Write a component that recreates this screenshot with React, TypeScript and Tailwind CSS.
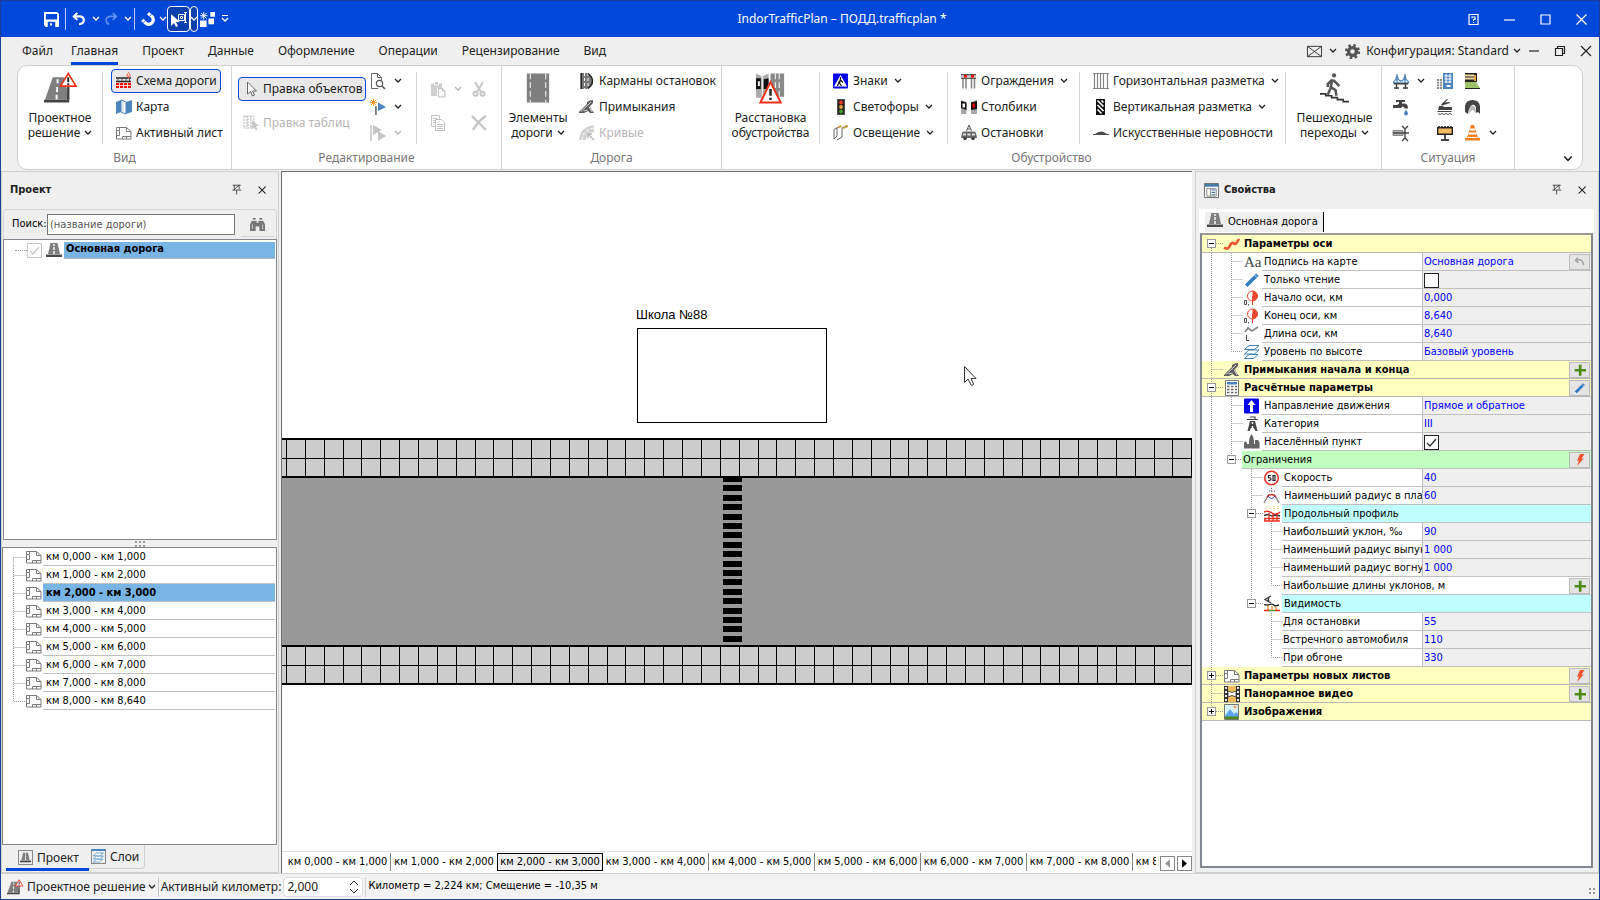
import { useState, type ReactNode } from 'react';
import clsx from 'clsx';

const UI = "font-['Noto_Sans','Open_Sans',sans-serif]";
const TREE = "font-['DejaVu_Sans_Condensed','DejaVu_Sans',sans-serif]";

/* ---------- icons ---------- */

const road = (
  <>
    <path d="M4.5 1h7l2.5 11H2z" fill="#7f7f7f" />
    <path d="M8 2v2M8 5v3M8 9v3" stroke="#fff" strokeWidth="1.4" />
    <path d="M0 12.5h16V15H0z" fill="#4a4a4a" />
  </>
);

const sheet = (
  <>
    <path d="M.5 2.500h10l4.500 4v7.500H.5z" fill="#fff" stroke="#7a7a7a" />
    <path d="M3.500 2.500v3H.5M3.500 6v4.500H.5M10.500 2.500v4h4.500M6.500 14v-2.500h8.500M10.500 11.500V14" fill="none" stroke="#7a7a7a" />
  </>
);

const junction = (
  <>
    <path d="M0 13L8 5V3l3-1.500L14 1v3l-3 3 1 3 3 4h-4l-2-2-4 2H0z" fill="#5a5a5a" />
    <path d="M2 12.500L12 3M10 7.500l3 5.500M4.500 12l4-1" stroke="#ddd" strokeWidth="1" />
  </>
);

const layers = (
  <g fill="#fff" stroke="#3b83b8" strokeWidth="1">
    <path d="M.5 14.500L5 10.500h9l-4.500 4z" />
    <path d="M.5 10L5 6h10l-4.500 4z" />
    <path d="M.5 5.500L5 1.500h10l-4.500 4z" />
  </g>
);

const marker = (
  <>
    <circle cx="8.500" cy="6" r="5" fill="#fff" stroke="#e8472e" />
    <path d="M8.500 1a5 5 0 0 1 0 10z" fill="#e8472e" />
    <path d="M8.500 6v9" stroke="#e8472e" />
    <path d="M.5 10.500h2v4h-2zM4.500 14v1.500" fill="none" stroke="#555" />
  </>
);

const ICONS: Record<string, ReactNode> = {
  road,
  sheet,
  junction,
  layers,
  marker,
  lighting: (
    <>
      <path d="M1 4.500V14l3-3V2.500M1 4.500l6-3M4 15l5-3V3l5-2.500" fill="none" stroke="#666" />
      <path d="M5 2.500L8.500 1M10 3l5-2" stroke="#c9a24a" strokeWidth="2" />
    </>
  ),
  save: (
    <path fillRule="evenodd" d="M0 0h14l2 2v14H2l-2-2zM2 2v6h12V2zM4 10.500V16h8v-5.500zM6.500 12h2v2.500h-2z" fill="#fff" />
  ),
  undo: <path d="M6 1L2 5l4 4M2.500 5H9q4.500.5 4.500 4.500T8 14" fill="none" stroke="#fff" strokeWidth="2.400" />,
  redo: <path d="M10 1l4 4-4 4M13.500 5H7Q2.500 5.500 2.500 9.500T6 14" fill="none" stroke="#5f92f0" strokeWidth="1.800" />,
  magnet: (
    <>
      <path d="M1.500 9l3.500 3.500a5.200 5.200 0 0 0 7.500-7.500L8 1.500" fill="none" stroke="#fff" strokeWidth="3.800" />
      <path d="M2.500 12.800l2.300-3M10 5L12 2" stroke="#0048d9" strokeWidth=".8" />
    </>
  ),
  pick: (
    <>
      <path d="M0 3v12l3-3 2 4 2-1-2-4h4z" fill="#fff" />
      <path d="M7.500 3.500h6v6h-6zM9.500 5.500h2v2h-2zM13 1.500h3M13 11.500h3M14.500 1.500v10" fill="none" stroke="#fff" />
    </>
  ),
  windows: (
    <>
      <path d="M0 9h7v7H0zM9 7h6v6H9zM11 0h5v5h-5z" fill="#fff" />
      <path d="M4 0v8M0 4h8M1 1l6 6M7 1L1 7" stroke="#fff" />
    </>
  ),
  scheme: (
    <>
      <path d="M0 5h15M0 8.500h15" stroke="#222" strokeWidth="1.600" />
      <path d="M2 5v3M6 5v3M10 5v3M13.500 5v3" stroke="#555" />
      <path d="M0 10h15v5H0z" fill="#f00" />
      <path d="M0 12.500h15M3.500 10v5M7.500 10v5M11.500 10v5" stroke="#fff" strokeWidth=".8" />
      <path d="M12.500-.5l2 3.500h-4zM12.500 3v3" stroke="#e5603a" fill="#fff" strokeWidth=".9" />
    </>
  ),
  map: (
    <>
      <path d="M0 3l5-2v12l-5 2zM10 3l6-2v12l-6 2z" fill="#4a86bd" />
      <path d="M5 1l5 2v12l-5-2z" fill="#fff" stroke="#4a86bd" />
      <path d="M7 2v11" stroke="#bcd3e6" />
    </>
  ),
  cursor: <path d="M4.500 1v12l3-2.500 2 4.500 2-1-2-4h4z" fill="#fff" stroke="#666" />,
  tableCursor: (
    <>
      <path d="M1 1h10v12H1zM4 4h4M4 7h4M4 10h4M4 1v12M8 1v12" fill="none" stroke="#b9b9b9" strokeDasharray="2 1" />
      <path d="M9 5v9l2-2 2 3.500 1.500-1L13 11h3z" fill="#c8c8c8" />
    </>
  ),
  findDoc: (
    <>
      <path d="M8 15.500H1.500V.5h6l4 4V7M7.500.5v4h4" fill="none" stroke="#666" />
      <circle cx="9.500" cy="10.500" r="3.200" fill="#fff" stroke="#555" strokeWidth="1.200" />
      <path d="M12 13l3 3" stroke="#555" strokeWidth="1.600" />
    </>
  ),
  newFlag: (
    <>
      <path d="M3.500 0v7M0 3.500h7M1 1l5 5M6 1L1 6" stroke="#f09a2a" />
      <path d="M5 7h1.800v9H5z" fill="#777" />
      <path d="M8 3.500l8 4.500-8 4z" fill="#4a86bd" />
    </>
  ),
  playFlag: (
    <>
      <path d="M0 0h2v16H0z" fill="#d0d0d0" />
      <path d="M3 0l9 5-9 5zM8 6l8 5-8 5z" fill="#c4c4c4" />
    </>
  ),
  paste: (
    <>
      <path d="M1 2.500h11V7H7v8H1z" fill="#cfcfcf" />
      <path d="M4.500.8h4v3h-4z" fill="#c2c2c2" stroke="#fff" />
      <path d="M8.500 7.500h4l2.500 2.500v6H8.500zM12.500 7.500V10H15" fill="#fff" stroke="#bdbdbd" />
    </>
  ),
  copy: (
    <>
      <path d="M1.500.5h8v11h-8zM3 3.500h4M3 5.500h4M3 7.500h4" fill="#fff" stroke="#c4c4c4" />
      <path d="M5.500 4.500h6l3 3v8h-9zM7 9.500h6M7 11.500h6M7 13.500h6" fill="#fff" stroke="#c4c4c4" />
    </>
  ),
  cut: (
    <g fill="none" stroke="#c6c6c6" strokeWidth="2">
      <path d="M4 1l6 10M12 1L6 11" />
      <circle cx="4.500" cy="12.800" r="2" />
      <circle cx="11.500" cy="12.800" r="2" />
    </g>
  ),
  remove: <path d="M1 1l14 14M15 1Q7 6 2 15" fill="none" stroke="#c4c4c4" strokeWidth="2.400" />,
  pocket: (
    <>
      <path d="M1 0h8l3 3q2 2 2 5t-2 5l-3 3H1z" fill="#777" />
      <path d="M2.500 0v16" stroke="#222" />
      <path d="M5.500 0v16M9 0v16" stroke="#fff" strokeDasharray="3 2" />
      <path d="M9 .5l3 3q1.500 2 1.500 4.500T12 12.500L9 15.500" fill="none" stroke="#222" strokeWidth="1.400" />
    </>
  ),
  curves: (
    <>
      <path d="M0 15Q1 2 15 0v7Q8 7 7 15z" fill="#d2d2d2" />
      <path d="M3 15Q4 5 15 3" fill="none" stroke="#fff" strokeDasharray="3 2" />
      <path d="M9 9l6 6M9 9h4M9 9v4" stroke="#b5b5b5" strokeWidth="1.300" />
    </>
  ),
  sign: (
    <>
      <rect width="15" height="15" y=".5" rx="1" fill="#0404e8" />
      <path d="M7.500 2l6.500 11.500h-13z" fill="#fff" />
      <path d="M7.500 4v2M7.500 6l-1 4 2 3M6.500 8l-2 5M7.500 7l2.500 2.500" stroke="#111" strokeWidth="1.200" fill="none" />
    </>
  ),
  lights: (
    <>
      <rect x="4.500" y=".5" width="7" height="15" fill="#222" stroke="#555" />
      <circle cx="8" cy="3.500" r="1.900" fill="#ef3b25" />
      <circle cx="8" cy="8" r="1.900" fill="#e5a53a" />
      <circle cx="8" cy="12.500" r="1.900" fill="#4aa02c" />
    </>
  ),
  fence: (
    <>
      <path d="M0 2h15v3H0z" fill="#b9b9b9" />
      <path d="M3 2h3v2.500H3zM10 2h3v2.500h-3z" fill="#f00" />
      <path d="M0 1.500h15M0 5.500h15" stroke="#555" />
      <path d="M2 6v9.500M5 6v9.500M10.500 6v9.500M13.500 6v9.500" stroke="#8a8a8a" strokeWidth="1.600" />
    </>
  ),
  posts: (
    <>
      <path d="M0 1l5.500 2v12H0zM10 3l6-2v14h-6z" fill="#a8a8a8" />
      <path d="M0 2l5.500 1.500V11L0 9zM10 3.500L16 2v8l-6 1z" fill="#111" />
      <path d="M1.500 4.500H4v4H1.500z" fill="#fff" />
      <path d="M11.500 4.500H14v4h-2.500z" fill="#f00" />
    </>
  ),
  stops: (
    <>
      <path d="M5.500 6L8 0l2.500 6M6.500 4h3" fill="none" stroke="#555" />
      <path d="M1 8q0-1.500 2-1.500h10q2 0 2 1.500l1 5H0z" fill="#666" />
      <path d="M2 8.500h3v2H2zM6.500 8.500h3v2h-3zM11 8.500h3v2h-3z" fill="#ddd" />
      <circle cx="4" cy="13.500" r="1.800" fill="#444" />
      <circle cx="12" cy="13.500" r="1.800" fill="#444" />
    </>
  ),
  hMark: <path d="M0 .5h16M0 15.500h16M1.500 0v16M4.500 0v16M7.500 0v16M10.500 0v16M14.500 0v16" stroke="#858585" strokeWidth="1.200" />,
  vMark: (
    <>
      <path d="M3 0h9v16H3z" fill="#111" />
      <path d="M4.500 1.500l6 6M4.500 6l6 6M4.500 10.500l4 4M8.500 1.500l2 2" stroke="#fff" strokeWidth="1.700" />
    </>
  ),
  bump: <path d="M0 9h2q6-5 12 0h2v1H0z" fill="#4a4a4a" />,
  bridge: (
    <>
      <path d="M0 10h16M4 1v9M12 1v9M0 9q3-1 4-7 1 6 4 6 3 0 4-6 1 6 4 7" fill="none" stroke="#4a86bd" strokeWidth="1.300" />
      <path d="M1 10.800h14M3.500 11v5M12.500 11v5M1 15h5M10 15h5" stroke="#444" strokeWidth="1.500" />
    </>
  ),
  buildings: (
    <>
      <path d="M6 0h10v16H6z" fill="#4a86bd" />
      <path d="M7.500 3h7M7.500 6h7M7.500 9h7M9 1v9M13 1v9" stroke="#fff" />
      <path d="M9.500 12h4v2h-4z" fill="#fff" />
      <path d="M0 6h5v10H0z" fill="#8a8a8a" />
      <path d="M0 8.500h5M0 11h5M0 13.500h5M2.500 6v10" stroke="#fff" strokeWidth=".8" />
    </>
  ),
  embank: (
    <>
      <path d="M0 0h12v9H0z" fill="#222" />
      <path d="M0 2.500h9M0 5.500h9" stroke="#f4d9a8" strokeWidth="1.800" />
      <path d="M9 2h2v6H9z" fill="#e5a53a" />
      <path d="M0 9h11l4 6H0z" fill="#9cc36a" />
      <path d="M0 15.500h15" stroke="#222" />
    </>
  ),
  tap: (
    <>
      <path d="M0 6h4l2-1.500V3H3V1h9v2H9v1.500h2q4 0 4 5h-3.500q0-2-2-2L8 9H6L4.500 9H0z" fill="#444" />
      <path d="M13 10.500q2 3 2 4a2 2 0 0 1-4 0q0-1 2-4z" fill="#4a86bd" />
    </>
  ),
  water: (
    <>
      <path d="M10 0L4 5.500l1 1L13 4V3L8 3.500l3-3zM2 7h4l1 1h8v3H1z" fill="#444" />
      <path d="M0 13l1-1h14l-1 1z" fill="#444" />
      <path d="M1 14.500l2 1 2-1 2 1 2-1 2 1 2-1 2 1" fill="none" stroke="#555" />
    </>
  ),
  tunnel: (
    <>
      <path d="M0 13V7q1-6 7.500-6Q14 1 15 7v8l-2-2-2 1V9q-1-4-4-3-3 2-4 9z" fill="#444" />
      <path d="M4 15Q4 7 7.500 6.500 11 7 11 14q-2-3-3.500-3T4 15z" fill="#b5b5b5" />
    </>
  ),
  pipe: (
    <>
      <path d="M0 5.500h10v5H0z" fill="#b5b5b5" stroke="#888" />
      <path d="M0 8h16M9 1l3 3v9l-3 3M15 1l-3 3v9l3 3" fill="none" stroke="#444" strokeWidth="1.400" />
    </>
  ),
  billboard: (
    <>
      <path d="M.7 2.700h14.600v6.600H.7z" fill="#f4bd63" stroke="#222" strokeWidth="1.400" />
      <path d="M2 1v2M5 1v2M8 1v2M11 1v2M14 1v2M8 9v6" stroke="#222" strokeWidth="1.600" />
      <path d="M4 14h8v2H4z" fill="#444" />
    </>
  ),
  cone: (
    <>
      <path d="M6 0h3l4 13h2v2.500H0V13h2z" fill="#f58220" />
      <path d="M5 4.500h5M3.500 8.500h8" stroke="#fff" strokeWidth="1.800" />
      <path d="M3 12.500h9" stroke="#fff" />
    </>
  ),
  axis: <path d="M0 11.500c3 2 5 1 6-2s3-3 4-2 2 1 5-4.500" fill="none" stroke="#f0522e" strokeWidth="2.600" />,
  pencil: (
    <>
      <path d="M0 16l1.500-4L12 1.500 14.500 4 4 14.500z" fill="#2f78c4" />
      <path d="M0 16l1-3 2 2zM10.500 3L13 5.500" fill="#fff" stroke="#fff" strokeWidth=".8" />
    </>
  ),
  length: (
    <>
      <path d="M1 6l3-4 4 3 6-4" fill="none" stroke="#8a8a8a" strokeWidth="1.800" />
      <path d="M2.500 9v5.500H5" fill="none" stroke="#444" />
    </>
  ),
  calc: (
    <>
      <path d="M1.500.5h13v15h-13z" fill="#fff" stroke="#777" />
      <path d="M3 2h10v2.500H3z" fill="#4a86bd" />
      <path d="M3 6.500h2.500M7 6.500h2.500M11 6.500h2M3 9.500h2.500M7 9.500h2.500M11 9.500h2M3 12.500h2.500M7 12.500h2.500M11 12.500h2" stroke="#666" strokeWidth="1.600" />
    </>
  ),
  direction: (
    <>
      <rect width="15" height="15" y=".5" rx="1" fill="#0404e8" />
      <path d="M7.500 2l4 5H9v7H6V7H3.500z" fill="#fff" />
    </>
  ),
  category: (
    <>
      <path d="M3 3.500h11M6 1h5v2" stroke="#444" strokeWidth="1.200" fill="none" />
      <path d="M6 5h5l2.500 10h-2L10 12H7l-1.500 3h-2z" fill="#444" />
      <path d="M8.500 6v2M8.500 10v4" stroke="#fff" strokeWidth="1.400" />
    </>
  ),
  city: <path d="M0 14.500V9l1.500-2L3 9v1h2V7q0-4 2.500-7Q10 3 10 7v3h1V6h3l1.500 2v6.500z" fill="#666" />,
  speed: (
    <>
      <circle cx="7.500" cy="8" r="6.800" fill="#fff" stroke="#e8301e" strokeWidth="1.500" />
      <path d="M7 5.500H4.500v2.200q2.500-.2 2.500 1.300T4.300 10.500M9 5.500h2v5H9z" fill="none" stroke="#222" strokeWidth="1.200" />
    </>
  ),
  radius: (
    <>
      <path d="M0 15l5-9M15 15l-5-9" stroke="#888" strokeWidth="1.500" />
      <path d="M7.500 0v5M5 3h6" stroke="#555" strokeDasharray="1 1.500" />
      <path d="M3 9q4.500-5 9 0" fill="none" stroke="#e8301e" strokeWidth="1.400" />
      <path d="M4 8q3.500 5 7 0" fill="none" stroke="#2a3ee0" />
    </>
  ),
  profile: (
    <>
      <path d="M2 0v4M6 0v4M10 0v4M14 0v4" stroke="#f4bd63" strokeDasharray="1 1" />
      <path d="M0 6q4-2 8 1t8-1" fill="none" stroke="#e8301e" strokeWidth="1.400" />
      <path d="M0 9.500l4-1 4 1.500 4-1 4 1" fill="none" stroke="#333" strokeWidth="1.300" />
      <path d="M0 12.500h16M0 15h16M1 12v3M5 7v8M9 8v7M13 7v8" stroke="#e8301e" strokeWidth="1.300" />
    </>
  ),
  sight: (
    <>
      <path d="M7 0L1 3.500 7 7M5 1.500Q3.500 3.500 5 5.500" fill="none" stroke="#333" strokeWidth="1.200" />
      <path d="M0 8.500q3 1 6 0t5 1.500l4-1" fill="none" stroke="#222" strokeWidth="1.300" />
      <path d="M4 10v4M8 10v4M12 11v3" stroke="#f58220" strokeWidth="1.300" />
      <path d="M0 14.500h5M11 14.500h5" stroke="#e8301e" strokeWidth="1.500" />
      <path d="M5 14.500h6" stroke="#4aa02c" strokeWidth="1.500" />
    </>
  ),
  film: (
    <>
      <path d="M0 0h16v16H0z" fill="#333" />
      <path d="M4 0h8v16H4z" fill="#eebb5c" />
      <path d="M4 5l4 1.500L12 5v6l-4-1.500L4 11z" fill="#fff" stroke="#333" strokeWidth=".8" />
      <path d="M2 1v14M14 1v14" stroke="#fff" strokeWidth="1.800" strokeDasharray="2 2" />
    </>
  ),
  image: (
    <>
      <path d="M.5.5h14v15H.5z" fill="#d9f1fb" stroke="#777" />
      <path d="M1 12l5-7 4 5 2-2 2 2v3H1z" fill="#58a4ee" />
      <path d="M1 12.500h13V15H1z" fill="#4c8a10" />
      <path d="M11 1.500v3M9.500 3h3" stroke="#f58220" />
    </>
  ),
  props: (
    <>
      <path d="M.5.5h15v15H.5z" fill="#fff" stroke="#666" />
      <path d="M1 1h14v3H1z" fill="#4a7ba8" />
      <path d="M3 6h10v8H3zM7 6v8" fill="none" stroke="#888" />
      <path d="M8 7.500h4M8 10h4M8 12.500h4" stroke="#4a7ba8" strokeWidth="1.200" />
    </>
  ),
  pin: <path d="M2 1.500h10M4 1.500v5M10 1.500v5M1.500 7.500h11M3.500 7L10 1.500M7 7.500V13" fill="none" stroke="#333" />,
  close: <path d="M3 3l8 8M11 3l-8 8" stroke="#222" strokeWidth="1.200" />,
  search: (
    <>
      <path d="M2 4h5v2h2V4h5l2 4v7h-6v-5H6v5H0V8zM3 1h3v2H3zM10 1h3v2h-3z" fill="#777" />
      <path d="M2 3.500h5M9 3.500h5M2.500 8v5M13.500 8v5" stroke="#efefef" strokeWidth=".8" />
    </>
  ),
  bolt: <path d="M8 0h6l-4 6h3L4 16l2.500-7H4z" fill="#f0522e" />,
  plus: <path d="M6.500 1h3.500v5.500H16V10h-6v5.500H6.500V10H1V6.500h5.500z" fill="#4c8a10" />,
  revert: <path d="M5 2L2 6l4 3M2.500 6Q11 2 13 12" fill="none" stroke="#a3a3a3" strokeWidth="2" />,
  gear: (
    <>
      <circle cx="8" cy="8" r="4.200" fill="none" stroke="#555" strokeWidth="3.600" />
      <circle cx="8" cy="8" r="6.700" fill="none" stroke="#555" strokeWidth="2.800" strokeDasharray="2.630 2.630" />
    </>
  ),
  mail: <path d="M.5 2.500h15v11H.5zM.5 2.500l15 11M15.500 2.500l-15 11" fill="none" stroke="#333" />,
};

function Icon({ name, className }: { name: string; className?: string }) {
  return (
    <svg viewBox="0 0 16 16" className={clsx('shrink-0 overflow-visible', className ?? 'size-4')} aria-hidden="true">
      {ICONS[name]}
    </svg>
  );
}

function Chevron({ className }: { className?: string }) {
  return (
    <svg viewBox="0 0 8 6" className={clsx('h-[6px] w-2 shrink-0', className)} aria-hidden="true">
      <path d="M1 1l3 3 3-3" fill="none" stroke="currentColor" strokeWidth="1.300" />
    </svg>
  );
}

const BIG_ICONS: Record<string, ReactNode> = {
  project: (
    <>
      <path d="M9 5h12l5 23H1z" fill="#7f7f7f" />
      <path d="M14 7v4M13.500 15v5M13 23v5" stroke="#fff" strokeWidth="2" />
      <path d="M0 28h26v3H0z" fill="#444" />
      <path d="M25 14v14" stroke="#444" strokeWidth="2.500" />
      <path d="M25 1l8 13H17z" fill="#fff" stroke="#f0301a" strokeWidth="1.700" />
      <path d="M25 5v5M25 11v2" stroke="#222" strokeWidth="2" />
    </>
  ),
  elements: (
    <>
      <path d="M5 1h23v30H5z" fill="#7f7f7f" />
      <path d="M8.500 1v30M24.500 1v30" stroke="#fff" strokeDasharray="6 3" />
    </>
  ),
  equip: (
    <>
      <path d="M1 1l6 3v22H1zM14 1L8 4v20h6z" fill="#aaa" />
      <path d="M1 6l5 0v11H1zM14 6L9 7v10h5z" fill="#111" />
      <path d="M3 9h2v5H3z" fill="#fff" />
      <path d="M16 1h14v24H16z" fill="#8a8a8a" />
      <path d="M21 1v24M25 1v24" stroke="#fff" strokeDasharray="6 3" />
      <path d="M16 10l10.500 21h-21z" fill="#fff" stroke="#f0301a" strokeWidth="2" />
      <path d="M16 17v7M16 26v2.500" stroke="#222" strokeWidth="2.500" />
    </>
  ),
  walker: (
    <>
      <circle cx="15.500" cy="3" r="2.200" fill="#555" />
      <path d="M14 7l-2 8 5 3 1 6M13 14l-4 9M13 8l-4 4v3M15 8l4 4 2 2" fill="none" stroke="#555" strokeWidth="2.600" />
      <path d="M1 22h6v2h6v2h6v2h6v2h6" fill="none" stroke="#333" strokeWidth="1.700" />
    </>
  ),
};

/* ---------- title bar and menu ---------- */

function TitleBar() {
  return (
    <header className="flex h-9 shrink-0 items-center bg-[#0048d9] text-white">
      <div className="flex items-center pl-[43px]">
        <button aria-label="Сохранить" className="flex"><Icon name="save" className="size-[15px]" /></button>
        <span className="mx-[6px] h-[22px] w-px bg-white/70" />
        <button aria-label="Отменить" className="flex items-center gap-[6px]"><Icon name="undo" className="size-[14px]" /><Chevron /></button>
        <button aria-label="Повторить" className="ml-1 flex items-center gap-[6px]"><Icon name="redo" className="size-[14px]" /><Chevron /></button>
        <span className="mr-[6px] ml-[2px] h-[22px] w-px bg-white/70" />
        <button aria-label="Привязка" className="flex items-center gap-1"><Icon name="magnet" className="size-[14px]" /><Chevron /></button>
        <button aria-label="Выбор" className="flex h-[26px] w-[23px] items-center justify-center rounded border border-white bg-[#0b3fae]"><Icon name="pick" className="size-4" /></button>
        <button aria-label="Параметры выбора" className="flex h-[26px] w-2 items-center justify-center rounded border border-white bg-[#0b3fae]"><Chevron /></button>
        <button aria-label="Окна" className="ml-[2px] flex"><Icon name="windows" className="size-[15px]" /></button>
        <button aria-label="Настроить панель" className="ml-[6px] flex flex-col items-center gap-px"><span className="h-px w-[6px] bg-white" /><Chevron /></button>
      </div>
      <h1 className="flex-1 text-center text-xs">IndorTrafficPlan – ПОДД.trafficplan *</h1>
      <div className="flex items-center">
        {[
          ['Справка', 'M1 .5h9v10H1zM4 4V3h3v2.500H5.500V7M5.500 8v1'],
          ['Свернуть', 'M0 6h11'],
          ['Развернуть', 'M1 1h9v9H1z'],
          ['Закрыть', 'M.5.5l10 10M10.500.5l-10 10'],
        ].map(([label, d]) => (
          <button key={label} aria-label={label} className="flex w-9 justify-center">
            <svg viewBox="0 0 11 11" className="size-[11px] overflow-visible"><path d={d} fill="none" stroke="#fff" strokeWidth="1.200" /></svg>
          </button>
        ))}
      </div>
    </header>
  );
}

const MENU = ['Файл', 'Главная', 'Проект', 'Данные', 'Оформление', 'Операции', 'Рецензирование', 'Вид'];

function MenuBar() {
  const [active, setActive] = useState('Главная');
  return (
    <div className="flex h-7 shrink-0 items-stretch pl-[21px] text-xs text-[#222]">
      <nav className="flex gap-6">
        {MENU.map((m) => (
          <button
            key={m}
            onClick={() => setActive(m)}
            className={clsx('flex items-center border-b-[3px] pt-[2px]', m === active ? 'border-[#0048d9]' : 'border-transparent', m === 'Файл' && '-mr-[6px]')}
          >
            {m}
          </button>
        ))}
      </nav>
      <div className="ml-auto flex items-center">
        <button aria-label="Сообщения" className="flex items-center gap-[7px]"><Icon name="mail" className="size-[15px]" /><Chevron /></button>
        <button className="ml-2 flex items-center"><Icon name="gear" className="mr-[6px] size-[15px]" />Конфигурация: Standard<Chevron className="ml-1" /></button>
        {[
          ['Свернуть окно', 'M1 6h10'],
          ['Восстановить окно', 'M1.500 3.500h7v7h-7zM3.500 3V1.500h7v7H9'],
          ['Закрыть окно', 'M1 1l10 10M11 1L1 11'],
        ].map(([label, d]) => (
          <button key={label} aria-label={label} className="flex w-[26px] justify-center">
            <svg viewBox="0 0 12 12" className="size-3"><path d={d} fill="none" stroke="#222" strokeWidth="1.200" /></svg>
          </button>
        ))}
      </div>
    </div>
  );
}

/* ---------- ribbon ---------- */

function Group({ title, className, children }: { title: string; className: string; children: ReactNode }) {
  return (
    <section className={clsx('flex shrink-0 flex-col border-r border-[#d4d4d4]', className)}>
      <div className="flex h-[83px] pt-[2px]">{children}</div>
      <h2 className="pt-px text-center text-xs leading-4 text-[#777]">{title}</h2>
    </section>
  );
}

function Big({ icon, lines, drop, className }: { icon: string; lines: [string, string]; drop?: boolean; className: string }) {
  return (
    <button className={clsx('flex shrink-0 flex-col items-center pt-1 text-xs leading-[15px] whitespace-nowrap', className)}>
      <svg viewBox="0 0 33 32" className="mb-[6px] size-8 overflow-visible" aria-hidden="true">{BIG_ICONS[icon]}</svg>
      <span>{lines[0]}</span>
      <span className="flex items-center gap-1">{lines[1]}{drop && <Chevron />}</span>
    </button>
  );
}

function Small({ icon, text, drop, active, off }: { icon: string; text?: string; drop?: boolean; active?: boolean; off?: boolean }) {
  return (
    <button
      disabled={off}
      aria-label={text ?? icon}
      className={clsx(
        'flex h-6 items-center rounded border pr-[3px] pl-1 text-xs whitespace-nowrap',
        active ? 'border-[#0048d9] bg-[#e8e8e8]' : 'border-transparent',
        off && 'text-[#b5b5b5]',
      )}
    >
      <Icon name={icon} />
      {text && <span className="ml-1">{text}</span>}
      {drop && <Chevron className={text ? 'ml-[6px]' : 'ml-2'} />}
    </button>
  );
}

const Col = ({ className, children }: { className: string; children: ReactNode }) => (
  <div className={clsx('flex shrink-0 flex-col items-start gap-[2px] pt-px', className)}>{children}</div>
);

const Sep = () => <span className="mt-1 h-[72px] w-px shrink-0 bg-[#d4d4d4]" />;

function Ribbon() {
  return (
    <div className="mx-4 flex h-[105px] shrink-0 overflow-hidden rounded-[10px] border border-[#d0d0d0] bg-white text-[#222]">
      <Group title="Вид" className="w-[214px]">
        <Big icon="project" lines={['Проектное', 'решение']} drop className="w-[84px]" />
        <Sep />
        <Col className="ml-2">
          <Small icon="scheme" text="Схема дороги" active />
          <Small icon="map" text="Карта" />
          <Small icon="sheet" text="Активный лист" />
        </Col>
      </Group>
      <Group title="Редактирование" className="w-[270px]">
        <div className="flex w-[133px] shrink-0 flex-col items-start gap-[10px] pt-[9px] pl-[6px]">
          <Small icon="cursor" text="Правка объектов" active />
          <Small icon="tableCursor" text="Правка таблиц" off />
        </div>
        <Col className="w-[51px]">
          <Small icon="findDoc" drop />
          <Small icon="newFlag" drop />
          <Small icon="playFlag" drop off />
        </Col>
        <Sep />
        <div className="ml-2 flex flex-col items-start gap-[10px] pt-[9px]">
          <Small icon="paste" drop off />
          <Small icon="copy" off />
        </div>
        <div className="flex flex-col items-start gap-[10px] pt-[9px]">
          <Small icon="cut" off />
          <Small icon="remove" off />
        </div>
      </Group>
      <Group title="Дорога" className="w-[220px]">
        <Big icon="elements" lines={['Элементы', 'дороги']} drop className="w-[72px]" />
        <Col className="">
          <Small icon="pocket" text="Карманы остановок" />
          <Small icon="junction" text="Примыкания" />
          <Small icon="curves" text="Кривые" off />
        </Col>
      </Group>
      <Group title="Обустройство" className="w-[660px]">
        <Big icon="equip" lines={['Расстановка', 'обустройства']} className="w-[97px]" />
        <Sep />
        <Col className="w-[127px] pl-2">
          <Small icon="sign" text="Знаки" drop />
          <Small icon="lights" text="Светофоры" drop />
          <Small icon="lighting" text="Освещение" drop />
        </Col>
        <Sep />
        <Col className="w-[131px] pl-2">
          <Small icon="fence" text="Ограждения" drop />
          <Small icon="posts" text="Столбики" />
          <Small icon="stops" text="Остановки" />
        </Col>
        <Sep />
        <Col className="w-[205px] pl-2">
          <Small icon="hMark" text="Горизонтальная разметка" drop />
          <Small icon="vMark" text="Вертикальная разметка" drop />
          <Small icon="bump" text="Искусственные неровности" />
        </Col>
        <Sep />
        <Big icon="walker" lines={['Пешеходные', 'переходы']} drop className="w-[97px]" />
      </Group>
      <Group title="Ситуация" className="w-[133px]">
        <Col className="w-11 pl-[6px]">
          <Small icon="bridge" drop />
          <Small icon="tap" />
          <Small icon="pipe" />
        </Col>
        <Col className="ml-[6px]">
          <Small icon="buildings" />
          <Small icon="water" />
          <Small icon="billboard" />
        </Col>
        <Col className="ml-[3px]">
          <Small icon="embank" />
          <Small icon="tunnel" />
          <Small icon="cone" drop />
        </Col>
      </Group>
      <div className="flex flex-1 items-end justify-end pr-[10px] pb-[7px]">
        <button aria-label="Свернуть ленту"><Chevron className="scale-125" /></button>
      </div>
    </div>
  );
}

/* ---------- project panel ---------- */

function PanelHeader({ title, icon }: { title: string; icon?: string }) {
  return (
    <div className="flex h-[37px] shrink-0 items-center px-2">
      {icon && <Icon name={icon} className="mr-[5px] size-[15px]" />}
      <h2 className={clsx(TREE, 'text-[11px] font-bold text-[#222]')}>{title}</h2>
      <button aria-label="Закрепить" className="ml-auto"><Icon name="pin" className="size-[13px]" /></button>
      <button aria-label="Закрыть панель" className="ml-3"><Icon name="close" className="size-[14px]" /></button>
    </div>
  );
}

const Grip = ({ cols }: { cols: number }) => (
  <svg viewBox={`0 0 ${cols * 4} 6`} style={{ width: cols * 4 }} className="h-[6px]" aria-hidden="true">
    {Array.from({ length: cols }, (_, i) => (
      <path key={i} d={`M${i * 4 + 1} 0h2v2h-2zM${i * 4 + 1} 4h2v2h-2z`} fill="#999" />
    ))}
  </svg>
);

const KM = ['0,000', '1,000', '2,000', '3,000', '4,000', '5,000', '6,000', '7,000', '8,000', '8,640'];
const SHEETS = KM.slice(0, -1).map((k, i) => `км ${k} - км ${KM[i + 1]}`);

interface SheetProps {
  current: number;
  onSelect: (i: number) => void;
}

function ProjectPanel({ current, onSelect }: SheetProps) {
  return (
    <aside className="flex w-[278px] shrink-0 flex-col border border-[#d0d0d0] bg-[#efefef]">
      <PanelHeader title="Проект" />
      <div className={clsx(TREE, 'mx-px flex h-[30px] shrink-0 items-center rounded-t border border-b-0 border-[#d4d4d4] pl-2 text-[11px]')}>
        <label htmlFor="search" className="w-[35px]">Поиск:</label>
        <input id="search" placeholder="(название дороги)" className="h-[21px] w-[188px] border border-[#777] bg-white px-[2px] placeholder:text-[#555]" />
        <button aria-label="Найти" className="ml-[6px] flex h-6 w-[33px] items-center justify-center border-b border-[#d0d0d0]"><Icon name="search" className="size-[15px]" /></button>
      </div>
      <ul className={clsx(TREE, 'mr-px ml-px h-[301px] shrink-0 border border-[#828790] bg-white pt-px text-[11px]')}>
        <li className="flex h-[18px] items-center pr-px pl-[11px]">
          <span className="w-3 border-b border-dotted border-[#999]" />
          <input type="checkbox" defaultChecked disabled aria-label="Основная дорога: видимость" className="peer size-[15px] appearance-none border border-[#c8c8c8] bg-white" />
          <svg viewBox="0 0 15 15" className="-ml-[15px] size-[15px]" aria-hidden="true"><path d="M3 8l3 3 6-7" fill="none" stroke="#c8c8c8" strokeWidth="1.300" /></svg>
          <Icon name="road" className="mr-[2px] ml-1 size-4" />
          <b className="flex h-[17px] flex-1 items-center border-b border-[#b8b8b8] bg-[#78b4e4] pl-[2px]">Основная дорога</b>
        </li>
      </ul>
      <div className="flex h-[7px] shrink-0 items-center justify-center">
        <Grip cols={3} />
      </div>
      <ul className={clsx(TREE, 'mr-px flex-1 overflow-hidden border border-[#828790] bg-white text-[11px]')}>
        {SHEETS.map((s, i) => (
          <li key={s}>
            <button onClick={() => onSelect(i)} className="flex h-[18px] w-full items-center pr-px text-left">
              <svg viewBox="0 0 23 18" className="h-[18px] w-[23px] shrink-0" aria-hidden="true">
                <path d={i === 0 ? 'M10.500 9.500V18M10.500 9.500H23' : i === SHEETS.length - 1 ? 'M10.500 0v9.500H23' : 'M10.500 0v18M10.500 9.500H23'} fill="none" stroke="#999" strokeDasharray="1 1" />
              </svg>
              <Icon name="sheet" />
              <span
                className={clsx(
                  'ml-px flex h-[18px] flex-1 items-center border-b border-[#c0c0c0] pt-px pl-[3px]',
                  i === current && 'bg-[#78b4e4] font-bold',
                )}
              >
                {s}
              </span>
            </button>
          </li>
        ))}
      </ul>
      <div className={clsx(UI, 'flex h-[27px] shrink-0 items-start pl-1 text-xs text-[#222]')}>
        <button className="flex h-[26px] w-[83px] items-center gap-1 border-b-[3px] border-[#0048d9] pt-[2px] pl-3"><span className="flex size-[15px] items-center justify-center border border-[#888]"><Icon name="road" className="size-[11px]" /></span>Проект</button>
        <button className="flex h-6 w-14 items-center gap-1 rounded-br border-r border-b border-[#d0d0d0] pl-[2px]"><span className="flex size-[15px] items-center justify-center border border-t-2 border-[#888] border-t-[#4a86bd]"><Icon name="layers" className="size-[11px]" /></span>Слои</button>
      </div>
    </aside>
  );
}

/* ---------- drawing ---------- */

const STRIPES = Array.from({ length: 18 }, (_, i) => i);
const TILE_LINES = Array.from({ length: 200 }, (_, i) => Math.round(4 + i * 18.86) + 0.5);

function Sidewalk({ y }: { y: number }) {
  return (
    <>
      <rect y={y} width="100%" height="38" fill="#ccc" />
      <path d={TILE_LINES.map((x) => `M${x} ${y}v38`).join('')} stroke="#000" />
      <path d={`M0 ${y}h4000M0 ${y + 38}h4000`} stroke="#000" strokeWidth="2" />
      <path d={`M0 ${y + 19.5}h4000`} stroke="#000" />
    </>
  );
}

function Drawing() {
  return (
    <svg className="block min-h-0 w-full flex-1 bg-white" role="img" aria-label="Схема дороги">
      <text x="354" y="147" className="font-['Liberation_Sans',sans-serif] text-[13px]">Школа №88</text>
      <rect x="355.500" y="156.500" width="189" height="94" fill="#fff" stroke="#000" />
      <rect y="304" width="100%" height="170" fill="#999" />
      <Sidewalk y={267} />
      <Sidewalk y={474} />
      {STRIPES.map((i) => (
        <rect key={i} x="441" y={304 + Math.round(i * 9.4)} width="19" height="6" fill="#000" />
      ))}
      <path d="M682.500 194.500v16l3.500-3.500 3 6q2 1 2.500-1l-2.500-5.500h5z" fill="#fff" stroke="#333" />
    </svg>
  );
}

function Canvas({ current, onSelect }: SheetProps) {
  return (
    <main className="flex min-w-0 flex-1 flex-col border-t border-l border-[#6e6e6e] bg-white">
      <Drawing />
      <div className={clsx(TREE, 'flex h-[22px] shrink-0 items-start border-t border-[#e0e0e0] text-[11px]')}>
        <div className="flex min-w-0 flex-1 overflow-hidden pl-[3px]">
          {SHEETS.map((s, i) => (
            <button
              key={s}
              onClick={() => onSelect(i)}
              className={clsx(
                'my-px flex h-[18px] w-[106px] shrink-0 items-center justify-center whitespace-nowrap',
                i === current ? 'border border-black bg-[#efefef]' : i === current - 1 ? '' : 'border-r border-[#888]',
              )}
            >
              {s}
            </button>
          ))}
        </div>
        <div className="flex gap-[2px] pt-1 pl-1">
          <button aria-label="Назад" className="flex h-[15px] w-[15px] items-center justify-center border border-[#888]"><svg viewBox="0 0 6 10" className="h-[9px] w-[5px]"><path d="M6 0v10L0 5z" fill="#999" /></svg></button>
          <button aria-label="Вперёд" className="flex h-[15px] w-[15px] items-center justify-center border border-[#888]"><svg viewBox="0 0 6 10" className="h-[9px] w-[5px]"><path d="M0 0v10l6-5z" fill="#000" /></svg></button>
        </div>
      </div>
    </main>
  );
}

/* ---------- properties ---------- */

interface Prop {
  // One character per indent column: | line, T branch, L last branch,
  // F/M/E expander at the start, middle or end of its branch, dot for nothing
  guides: string;
  icon?: string;
  name: string;
  value?: string;
  checked?: boolean;
  closed?: boolean;
  fill?: string;
  action?: string;
}

const YELLOW = 'bg-[#ffffc0]';
const CYAN = 'bg-[#c0ffff]';

const PROPS: Prop[] = [
  { guides: 'F', icon: 'axis', name: 'Параметры оси', fill: YELLOW },
  { guides: '|T', icon: 'letters', name: 'Подпись на карте', value: 'Основная дорога', action: 'revert' },
  { guides: '|T', icon: 'pencil', name: 'Только чтение', checked: false },
  { guides: '|T', icon: 'marker', name: 'Начало оси, км', value: '0,000' },
  { guides: '|T', icon: 'marker', name: 'Конец оси, км', value: '8,640' },
  { guides: '|T', icon: 'length', name: 'Длина оси, км', value: '8,640' },
  { guides: '|L', icon: 'layers', name: 'Уровень по высоте', value: 'Базовый уровень' },
  { guides: 'T', icon: 'junction', name: 'Примыкания начала и конца', fill: YELLOW, action: 'plus' },
  { guides: 'M', icon: 'calc', name: 'Расчётные параметры', fill: YELLOW, action: 'pencil' },
  { guides: '|T', icon: 'direction', name: 'Направление движения', value: 'Прямое и обратное' },
  { guides: '|T', icon: 'category', name: 'Категория', value: 'III' },
  { guides: '|T', icon: 'city', name: 'Населённый пункт', checked: true },
  { guides: '|E', name: 'Ограничения', fill: 'bg-[#c0ffc0]', action: 'bolt' },
  { guides: '|.T', icon: 'speed', name: 'Скорость', value: '40' },
  { guides: '|.T', icon: 'radius', name: 'Наименьший радиус в план', value: '60' },
  { guides: '|.M', icon: 'profile', name: 'Продольный профиль', fill: CYAN },
  { guides: '|.|T', name: 'Наибольший уклон, ‰', value: '90' },
  { guides: '|.|T', name: 'Наименьший радиус выпук', value: '1 000' },
  { guides: '|.|T', name: 'Наименьший радиус вогнут', value: '1 000' },
  { guides: '|.|L', name: 'Наибольшие длины уклонов, м', action: 'plus' },
  { guides: '|.E', icon: 'sight', name: 'Видимость', fill: CYAN },
  { guides: '|..T', name: 'Для остановки', value: '55' },
  { guides: '|..T', name: 'Встречного автомобиля', value: '110' },
  { guides: '|..L', name: 'При обгоне', value: '330' },
  { guides: 'M', icon: 'sheet', name: 'Параметры новых листов', fill: YELLOW, closed: true, action: 'bolt' },
  { guides: 'T', icon: 'film', name: 'Панорамное видео', fill: YELLOW, action: 'plus' },
  { guides: 'E', icon: 'image', name: 'Изображения', fill: YELLOW, closed: true },
];

const LINES: Record<string, string> = {
  '|': 'M9.500 0v18',
  T: 'M9.500 0v18M9.500 8.500H21',
  L: 'M9.500 0v8.500H21',
  F: 'M9.500 13v5M14 8.500h7',
  M: 'M9.500 0v18M14 8.500h7',
  E: 'M9.500 0v4M14 8.500h7',
};

function Guide({ kind, closed }: { kind: string; closed?: boolean }) {
  return (
    <svg viewBox="0 0 20 18" className="h-[18px] w-5 shrink-0 overflow-visible" aria-hidden="true">
      {LINES[kind] && <path d={LINES[kind]} fill="none" stroke="#98a0a6" strokeDasharray="1 1" />}
      {'FME'.includes(kind) && (
        <>
          <rect x="5.500" y="4.500" width="8" height="8" fill="#fff" stroke="#9a9a9a" />
          <path d={closed ? 'M7 8.500h5M9.500 6v5' : 'M7 8.500h5'} stroke="#000" />
        </>
      )}
    </svg>
  );
}

function ActionButton({ name }: { name: string }) {
  return (
    <button aria-label={name} className="mr-px ml-auto flex h-4 w-[21px] shrink-0 items-center justify-center border border-[#bcbcbc] bg-[#e4e4e4]">
      <Icon name={name} className="size-3" />
    </button>
  );
}

function PropRow({ p, index }: { p: Prop; index: number }) {
  const top = p.fill === YELLOW;
  const wide = p.value === undefined && p.checked === undefined;
  const id = `prop-${index}`;
  return (
    <tr>
      <th colSpan={wide ? 2 : 1} className="p-0 text-left font-normal">
        <div className={clsx('flex h-[18px] overflow-hidden', top && 'border-b border-[#b8b8b8] bg-[#ffffc0] font-bold')}>
          {[...p.guides].map((g, i) => (
            <Guide key={i} kind={g} closed={p.closed} />
          ))}
          {p.icon && (
            <span className="flex w-5 shrink-0 items-center pl-[2px]">
              {p.icon === 'letters' ? <span className="font-['Liberation_Serif',serif] text-[15px] text-[#444]">Aa</span> : <Icon name={p.icon} />}
            </span>
          )}
          <span id={id} className={clsx('flex min-w-0 flex-1 items-center overflow-hidden pt-px whitespace-nowrap', p.icon ? 'pl-[2px]' : 'pl-px', !top && ['border-b border-[#c0c0c0]', p.fill])}>
            {p.name}
            {wide && p.action && <ActionButton name={p.action} />}
          </span>
        </div>
      </th>
      {!wide && (
        <td className="p-0">
          <div className="flex h-[18px] items-center border-b border-l border-[#c0c0c0] bg-[#efefef] pt-px pl-px text-[#0000ff]">
            {p.value}
            {p.checked !== undefined && (
              <>
                <input type="checkbox" defaultChecked={p.checked} aria-labelledby={id} className="peer size-[15px] appearance-none border border-[#222] bg-white" />
                <svg viewBox="0 0 15 15" className="pointer-events-none -ml-[15px] size-[15px] opacity-0 peer-checked:opacity-100" aria-hidden="true"><path d="M3 8l3 3 6-7" fill="none" stroke="#333" strokeWidth="1.400" /></svg>
              </>
            )}
            {p.action && <ActionButton name={p.action} />}
          </div>
        </td>
      )}
    </tr>
  );
}

function PropertiesPanel() {
  return (
    <aside className="ml-px flex w-[404px] shrink-0 flex-col border border-[#d0d0d0] bg-[#efefef] pr-1 pb-1 pl-[3px]">
      <div className="-mr-1 -ml-[3px]"><PanelHeader title="Свойства" icon="props" /></div>
      <div className={clsx(TREE, 'flex h-6 shrink-0 items-end bg-white pl-[6px] text-[11px]')}>
        <button className="mb-px flex h-5 items-center gap-[5px] border-r border-black bg-[#efefef] pr-[5px] pl-[2px]"><Icon name="road" className="mb-1 size-4" />Основная дорога</button>
      </div>
      <div className="mr-px ml-px min-h-0 flex-1 overflow-hidden border-2 border-[#828790] border-t-[#9a9a9a] bg-white">
        <table className={clsx(TREE, 'w-full table-fixed border-collapse text-[11px]')}>
          <colgroup>
            <col className="w-[220px]" />
            <col />
          </colgroup>
          <tbody>
            {PROPS.map((p, i) => (
              <PropRow key={i} p={p} index={i} />
            ))}
          </tbody>
        </table>
      </div>
    </aside>
  );
}

/* ---------- status bar ---------- */

function StatusBar() {
  return (
    <footer className="flex h-[26px] shrink-0 items-center border-t border-[#d0d0d0] bg-[#f3f3f3] pl-[6px] text-xs text-[#222]">
      <button className="flex items-center">
        <svg viewBox="0 0 33 32" className="mr-1 size-4" aria-hidden="true">{BIG_ICONS.project}</svg>
        Проектное решение
        <Chevron className="ml-[2px]" />
      </button>
      <span className="mx-[2px] h-5 w-px bg-[#c4c4c4]" />
      <label htmlFor="km">Активный километр:</label>
      <span className="ml-[2px] flex h-5 w-20 items-center rounded border border-[#ddd] bg-white pr-[3px]">
        <input id="km" defaultValue="2,000" className="min-w-0 flex-1 pl-[3px] outline-none" />
        <button aria-label="Изменить километр"><svg viewBox="0 0 10 14" className="h-[14px] w-[10px]"><path d="M1 5l4-4 4 4M1 9l4 4 4-4" fill="none" stroke="#333" /></svg></button>
      </span>
      <span className="mx-[2px] h-5 w-px bg-[#d0d0d0]" />
      <span className={clsx(TREE, 'text-[11px] text-black')}>Километр = 2,224 км; Смещение = -10,35 м</span>
      <span className="mt-2 mr-[3px] ml-auto"><Grip cols={2} /></span>
    </footer>
  );
}

export default function App() {
  const [current, setCurrent] = useState(2);
  return (
    <div className={clsx(UI, 'flex h-screen flex-col overflow-hidden border border-[#1c3f94] bg-[#efefef] text-black')}>
      <TitleBar />
      <MenuBar />
      <Ribbon />
      <div className="flex min-h-0 flex-1 gap-[2px] pt-px">
        <ProjectPanel current={current} onSelect={setCurrent} />
        <Canvas current={current} onSelect={setCurrent} />
        <PropertiesPanel />
      </div>
      <StatusBar />
    </div>
  );
}
